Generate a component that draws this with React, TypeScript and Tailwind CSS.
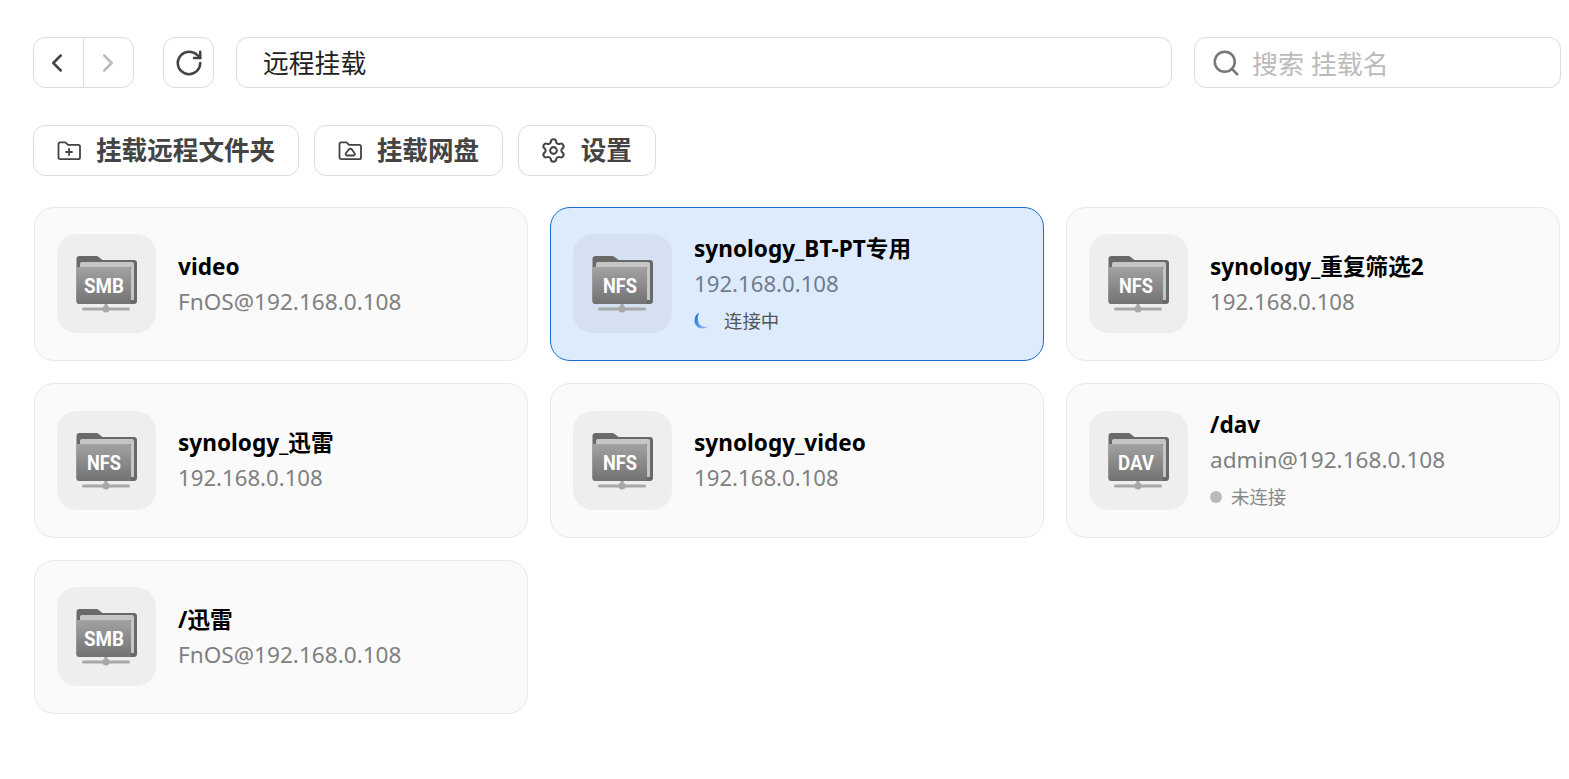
import React from "react";
import { ChevronLeft, ChevronRight, RotateCw, Search, Settings } from "lucide-react";

type Mount = {
  name: string;
  host: string;
  kind: string;
  status?: "connecting" | "offline";
};

const mounts: Mount[] = [
  { name: "video", host: "FnOS@192.168.0.108", kind: "SMB" },
  { name: "synology_BT-PT专用", host: "192.168.0.108", kind: "NFS", status: "connecting" },
  { name: "synology_重复筛选2", host: "192.168.0.108", kind: "NFS" },
  { name: "synology_迅雷", host: "192.168.0.108", kind: "NFS" },
  { name: "synology_video", host: "192.168.0.108", kind: "NFS" },
  { name: "/dav", host: "admin@192.168.0.108", kind: "DAV", status: "offline" },
  { name: "/迅雷", host: "FnOS@192.168.0.108", kind: "SMB" },
];

// label widths measured off the picture, the badge font is narrower than Roboto
const labelWidth: Record<string, number> = { SMB: 40, NFS: 34, DAV: 36 };

const FolderIcon = ({ kind, id }: { kind: string; id: number }) => (
  <svg width="99" height="99" viewBox="0 0 99 99">
    <defs>
      <linearGradient id={`panel-${id}`} x1="0" y1="0" x2="0" y2="1">
        <stop offset="0" stopColor="#a2a2a2" />
        <stop offset="1" stopColor="#727272" />
      </linearGradient>
    </defs>
    {/* back of the folder */}
    <path
      d="M22.500 22h16c1.500 0 2.500.5 3.500 1.300l3.500 2.700H77c1.800 0 3 1.200 3 3V67c0 1.800-1.200 3-3 3H22.500c-1.800 0-3-1.200-3-3V25c0-1.800 1.200-3 3-3z"
      fill="#696969"
    />
    {/* paper sheet */}
    <path d="M23 33v-3c0-1.200.8-2 2-2h50c1.200 0 2 .8 2 2v36h-3V33z" fill="#c6c6c6" />
    {/* front panel */}
    <path
      d="M19.500 33H72c1.200 0 2 .8 2 2v35H22.500c-1.800 0-3-1.200-3-3V33z"
      fill={`url(#panel-${id})`}
    />
    <text
      x="47"
      y="58.500"
      textAnchor="middle"
      fill="#fff"
      fontFamily="Roboto, sans-serif"
      fontWeight="700"
      fontSize="21"
      textLength={labelWidth[kind]}
      lengthAdjust="spacingAndGlyphs"
    >
      {kind}
    </text>
    {/* network stem */}
    <rect x="25" y="73.500" width="48" height="3" rx="1.500" fill="#a8a8a8" />
    <rect x="47.500" y="70" width="3" height="5" fill="#a8a8a8" />
    <circle cx="49" cy="75" r="3.500" fill="#a8a8a8" />
  </svg>
);

const Spinner = () => (
  <svg width="16" height="17" viewBox="0 0 16 17">
    <defs>
      <linearGradient id="spin" x1="0" y1="0" x2="1" y2="1">
        <stop offset="0" stopColor="#1668d8" />
        <stop offset="0.7" stopColor="#6aa5ee" />
        <stop offset="1" stopColor="#a9c8f3" />
      </linearGradient>
    </defs>
    <path
      d="M5 .5C2 2 .5 5 .5 8.500c0 4.500 3.500 8 8 8 2.300 0 4.500-.8 6-2.200-1.800.7-3.500.8-5 .5-3-.6-5-2.800-5.500-6C3.600 6 4 3 5 .5z"
      fill="url(#spin)"
    />
  </svg>
);

const ToolButton = ({ icon, label }: { icon: React.ReactNode; label: string }) => (
  <button className="h-[51px] px-[23px] flex items-center gap-[15px] bg-white border border-[#dcdcdc] rounded-[12px] text-[25.600px] font-bold text-[#444]">
    {icon}
    <span className="mt-[2px]">{label}</span>
  </button>
);

const MountCard = ({ mount, id }: { mount: Mount; id: number }) => {
  const active = mount.status === "connecting";
  // the bare address renders a little narrower than the user@address form
  const hostSize = mount.host.includes("@") ? "text-[22.600px]" : "text-[22.200px]";
  return (
    <div
      className={
        active
          ? "flex items-center pl-[22px] gap-[22px] rounded-[20px] border border-[#1a6dcc] bg-[#deebfd]"
          : "flex items-center pl-[22px] gap-[22px] rounded-[20px] border border-[#e8e8e8] bg-[#fafafa]"
      }
    >
      <div className={active ? "w-[99px] h-[99px] shrink-0 rounded-[20px] bg-[#d5e0f2]" : "w-[99px] h-[99px] shrink-0 rounded-[20px] bg-[#eeeeee]"}>
        <FolderIcon kind={mount.kind} id={id} />
      </div>
      <div className={mount.status ? "flex flex-col min-w-0 mt-px" : "flex flex-col min-w-0"}>
        <div className="pt-[2px] text-[22.600px] leading-[34px] font-bold text-black">{mount.name}</div>
        <div className={`${hostSize} leading-[36px] ${active ? "text-[#6f7d8c]" : "text-[#808080]"}`}>
          {mount.host}
        </div>
        {mount.status === "connecting" && (
          <div className="flex items-center gap-[14px] mt-px text-[18.400px] leading-[36px] text-[#555]">
            <Spinner />
            连接中
          </div>
        )}
        {mount.status === "offline" && (
          <div className="flex items-center gap-[9px] mt-px text-[18.400px] leading-[36px] text-[#888]">
            <span className="w-3 h-3 rounded-full bg-[#bbbbbb]" />
            未连接
          </div>
        )}
      </div>
    </div>
  );
};

export default function App() {
  return (
    <div
      className="w-[1569px] h-[779px] overflow-hidden bg-white pt-[37px] pl-[33px]"
      style={{ fontFamily: '"Noto Sans", "Noto Sans CJK SC", sans-serif' }}
    >
      {/* Top navigation */}
      <div className="flex items-center w-[1528px] h-[51px]">
        <div className="flex w-[101px] h-full border border-[#dcdcdc] rounded-[12px]">
          <div className="w-[50px] flex items-center justify-center pr-[3px] border-r border-[#dcdcdc] text-[#444]">
            <ChevronLeft size={30} strokeWidth={2} />
          </div>
          <div className="flex-1 flex items-center justify-center pr-[2px] text-[#bbb]">
            <ChevronRight size={30} strokeWidth={2} />
          </div>
        </div>
        <div className="ml-[29px] w-[51px] h-full flex items-center justify-center border border-[#dcdcdc] rounded-[12px] text-[#444]">
          <RotateCw size={30} strokeWidth={2} />
        </div>
        <div className="ml-[22px] flex-1 h-full flex items-center pl-[26px] pt-[2px] border border-[#dcdcdc] rounded-[12px] text-[25.800px] text-[#222]">
          远程挂载
        </div>
        <div className="ml-[22px] w-[367px] h-full flex items-center gap-[11px] pl-[16px] border border-[#dcdcdc] rounded-[12px] text-[26px] text-[#bbb]">
          <Search size={30} strokeWidth={2} className="text-[#777]" />
          <span className="mt-[3px]">搜索 挂载名</span>
        </div>
      </div>

      {/* Toolbar */}
      <div className="flex gap-[14.600px] mt-[37px]">
        <ToolButton
          label="挂载远程文件夹"
          icon={
            <svg width="24" height="24" viewBox="0 0 24 24" fill="none" stroke="#444" strokeWidth="1.800" strokeLinejoin="round" strokeLinecap="round">
              <path d="M1.500 5c0-1 .7-1.700 1.700-1.700h5.300l2.500 2.500h10.300c1 0 1.700.7 1.700 1.700v11c0 1-.7 1.700-1.700 1.700H3.200c-1 0-1.700-.7-1.700-1.700z" />
              <path d="M12 10v6M9 13h6" />
            </svg>
          }
        />
        <ToolButton
          label="挂载网盘"
          icon={
            <svg width="24" height="24" viewBox="0 0 24 24" fill="none" stroke="#444" strokeWidth="1.800" strokeLinejoin="round" strokeLinecap="round">
              <path d="M1.500 5c0-1 .7-1.700 1.700-1.700h5.300l2.500 2.500h10.300c1 0 1.700.7 1.700 1.700v11c0 1-.7 1.700-1.700 1.700H3.200c-1 0-1.700-.7-1.700-1.700z" />
              <path d="M9 16.500h6.500c1.500 0 2-2 .5-3l-2-3c-.8-1-2.500-1-3.200 0l-2.300 3c-1.500 1-1 3 .5 3z" />
            </svg>
          }
        />
        <ToolButton label="设置" icon={<Settings size={27} strokeWidth={1.8} color="#444" className="-mx-[1.500px]" />} />
      </div>

      {/* Mount cards */}
      <div className="grid grid-cols-3 auto-rows-[154.500px] gap-[22px] w-[1526px] ml-px mt-[30.600px]">
        {mounts.map((m, i) => (
          <MountCard key={m.name} mount={m} id={i} />
        ))}
      </div>
    </div>
  );
}
